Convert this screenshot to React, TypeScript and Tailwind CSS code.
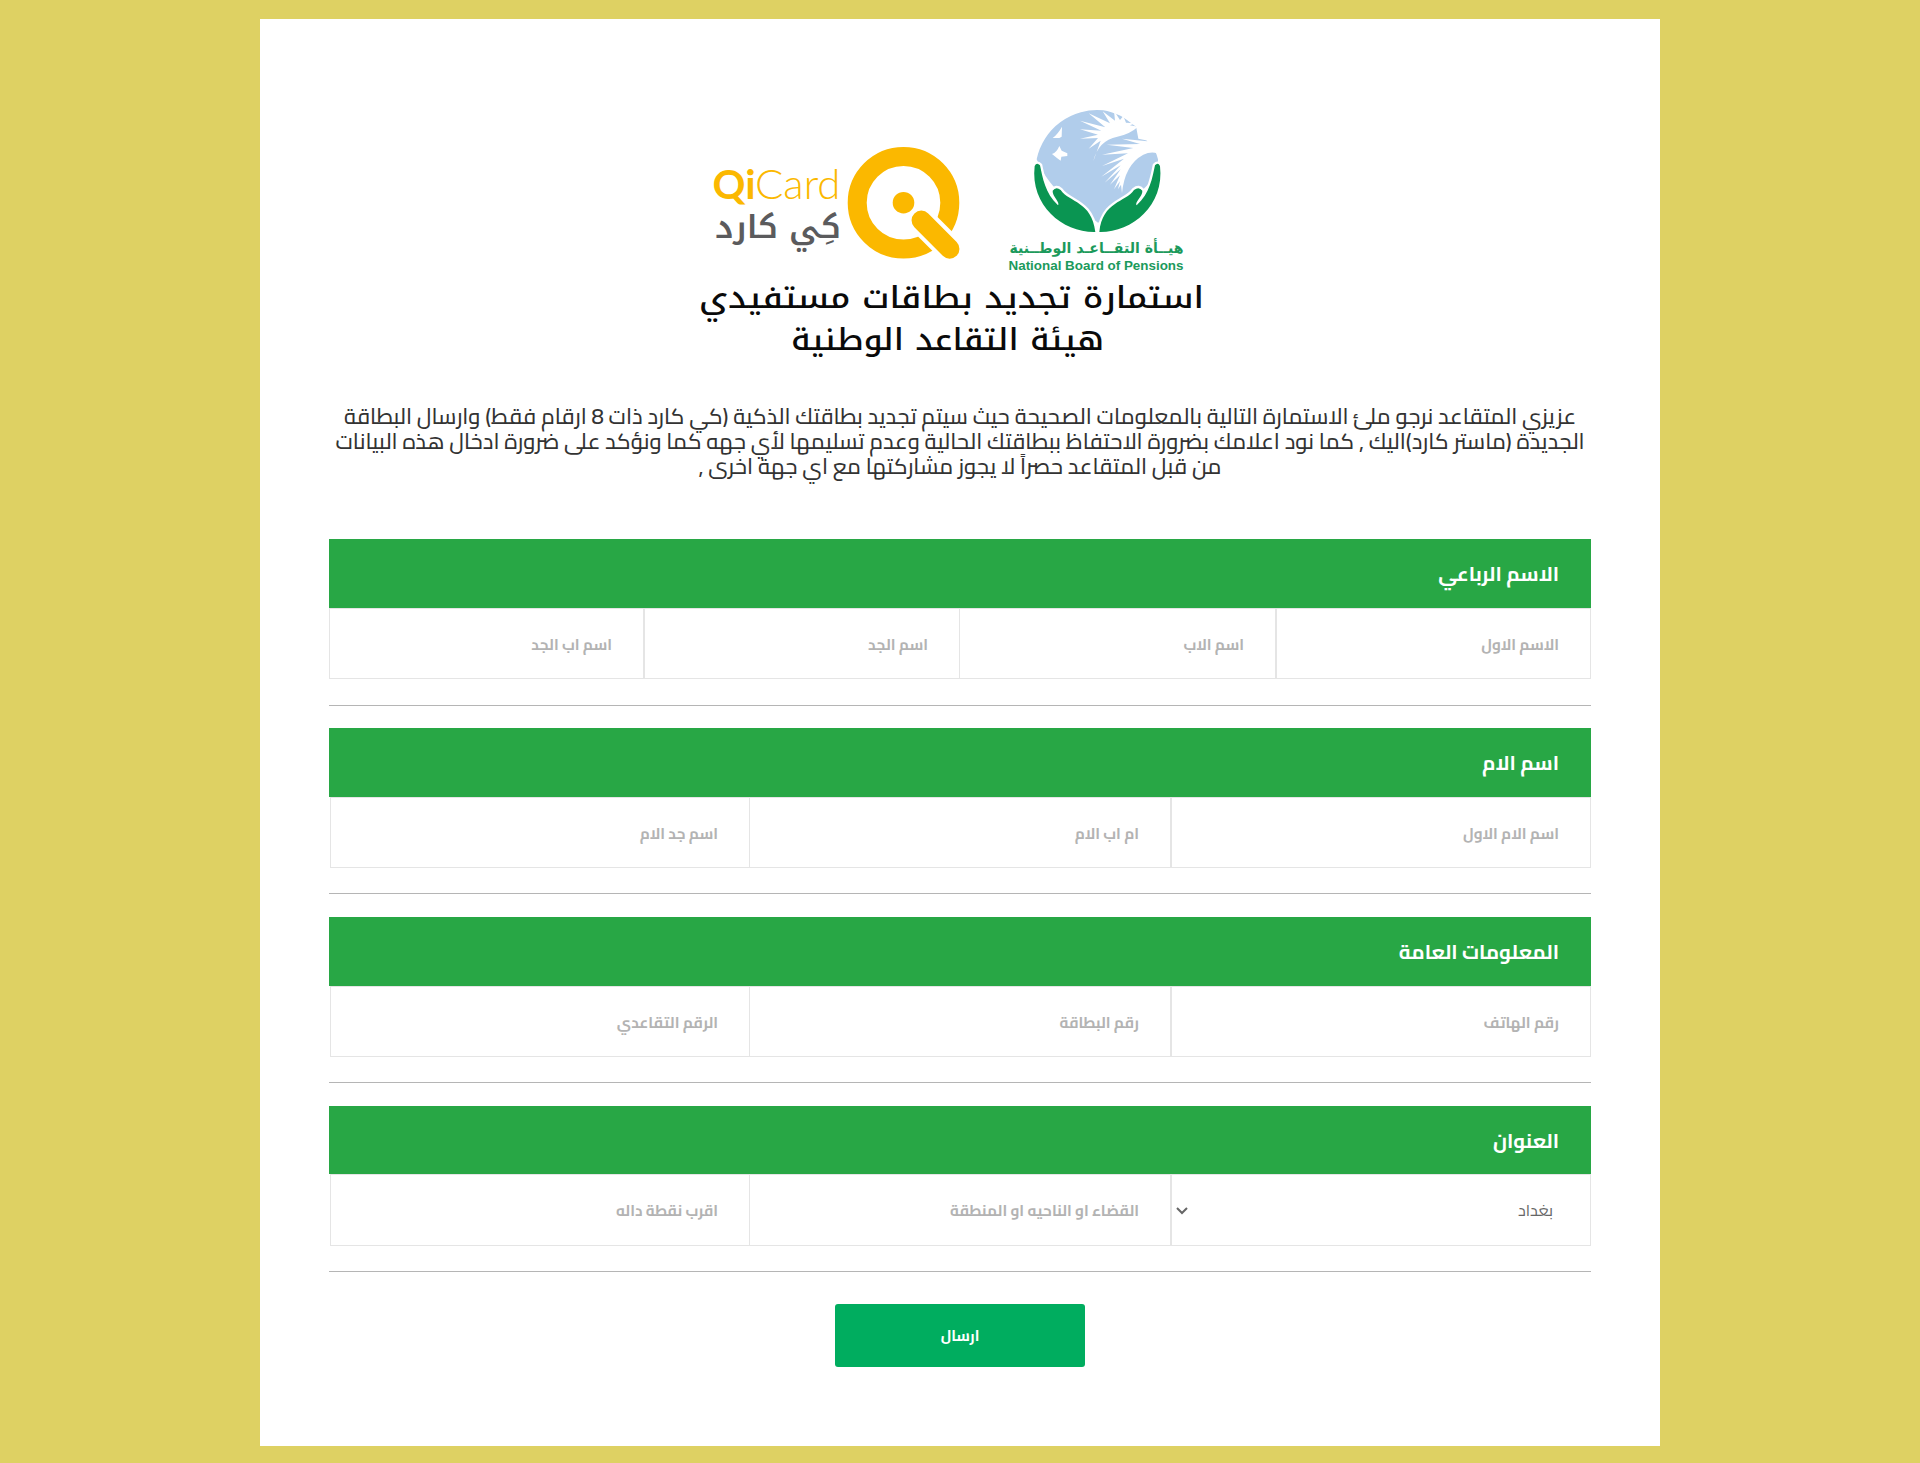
const four = ['w-[315px]', 'w-[317px]', '-mr-px w-[316px]', 'w-[315px]'];
const three = ['w-[420px]', 'w-[422px]', '-mr-px w-[420px]'];

const sections = [
  { title: 'الاسم الرباعي', head: 'h-[69px]', row: 'h-[71px]', rule: 'mt-[26px] mb-[22px]', widths: four, fields: ['الاسم الاول', 'اسم الاب', 'اسم الجد', 'اسم اب الجد'] },
  { title: 'اسم الام', head: 'h-[69px]', row: 'h-[71px]', rule: 'mt-[25px] mb-[23px]', widths: three, fields: ['اسم الام الاول', 'ام اب الام', 'اسم جد الام'] },
  { title: 'المعلومات العامة', head: 'h-[69px]', row: 'h-[71px]', rule: 'mt-[25px] mb-[23px]', widths: three, fields: ['رقم الهاتف', 'رقم البطاقة', 'الرقم التقاعدي'] },
  { title: 'العنوان', head: 'h-[68px]', row: 'h-[72px]', rule: 'mt-[25px] mb-[32px]', widths: three.slice(1), select: 'بغداد', fields: ['القضاء او الناحيه او المنطقة', 'اقرب نقطة داله'] },
];

function Globe() {
  return (
    <g transform="translate(1030 106) scale(0.33333)">
      <path d="M20 160 A185 185 0 0 1 220 13 C250 18 290 35 318 60 C345 90 375 120 384 160 L384 200 C340 260 250 330 204 350 C150 310 60 260 20 160Z" fill="#b1cdeb" />
      <g fill="#fff">
        <path d="M96 62 L95 92 L88 96 L68 96 Q84 84 96 62Z" />
        <path d="M66 144 Q80 140 88 120 L95 134 L112 142 L112 150 L94 152 L92 164 Q80 156 66 144Z" />
        <path d="M190 166 Q204 104 262 92 Q300 84 324 62 L300 58 L316 52 L288 50 L280 30 L270 42 L252 14 L255 44 L218 16 L240 52 L176 22 L226 64 L150 44 L214 74 L150 70 L204 86 L150 98 L204 96 L176 128 L212 104Z" />
        <path d="M276 262 Q284 176 340 146 Q362 136 382 142 L400 100 L340 92 L352 106 L276 98 L330 114 L230 116 L310 126 L216 146 L294 142 L216 180 L282 158 L214 212 L272 178 L224 230 L272 190 L240 236 L270 208 L252 250 L270 226 L264 250 L273 236Z" />
        <path d="M256 10 Q310 20 345 62 L318 62 L280 34Z" />
        <path d="M335 62 Q365 90 385 134 L362 106 L325 98 L318 60Z" />
      </g>
      <g fill="#0a9552" stroke="#fff" strokeWidth="14" paintOrder="stroke">
        <path d="M14 180 Q20 168 30 178 C38 215 45 262 84 298 C92 290 66 270 68 254 Q78 240 92 252 C118 290 185 285 196 378 C100 380 0 300 14 180Z" />
        <path d="M390 180 Q384 168 375 178 C367 215 360 262 320 298 C312 290 339 270 337 254 Q327 240 312 252 C286 290 218 285 208 378 C304 380 404 300 390 180Z" />
      </g>
    </g>
  );
}

function Banner() {
  return (
    <svg viewBox="690 100 520 270" className="h-[270px] w-[520px] font-['Noto_Kufi_Arabic','Cairo','DejaVu_Sans',sans-serif]">
      <Globe />
      <g fill="#1c9a5c" className="font-bold">
        <text direction="rtl" x="1183.5" y="253" fontSize="15" textLength="174" lengthAdjust="spacingAndGlyphs" className="font-['DejaVu_Sans',sans-serif]">هيــأة التقــاعـد الوطــنية</text>
        <text direction="ltr" x="1008.5" y="269.5" fontSize="13.3" textLength="175" lengthAdjust="spacingAndGlyphs" className="font-['Liberation_Sans',sans-serif]">National Board of Pensions</text>
      </g>
      <circle cx="903.5" cy="202.7" r="46.3" fill="none" stroke="#fbb800" strokeWidth="19" />
      <path d="M914 213 L965 264" stroke="#fff" strokeWidth="27.5" />
      <path d="M921.3 220.3 L949.7 248.9" stroke="#fbb800" strokeWidth="19.5" strokeLinecap="round" />
      <circle cx="903.5" cy="202.7" r="10.8" fill="#fbb800" />
      <g fill="#fbb800" fontSize="41" className="font-['Lato',sans-serif]">
        <text direction="ltr" x="712.5" y="199" textLength="43" lengthAdjust="spacingAndGlyphs" className="font-bold">Qi</text>
        <text direction="ltr" x="755" y="199" textLength="85.5" lengthAdjust="spacingAndGlyphs" className="font-light">Card</text>
      </g>
      <text direction="rtl" x="841" y="237.7" fontSize="31" textLength="126" lengthAdjust="spacingAndGlyphs" fill="#5b5b5d" className="font-semibold">كِي كارد</text>
      <g fill="#0a0a0a" fontSize="30" className="font-medium">
        <text direction="rtl" x="1204" y="308" textLength="505" lengthAdjust="spacingAndGlyphs">استمارة تجديد بطاقات مستفيدي</text>
        <text direction="rtl" x="1104" y="350" textLength="313" lengthAdjust="spacingAndGlyphs">هيئة التقاعد الوطنية</text>
      </g>
    </svg>
  );
}

const box = 'h-full min-w-0 border border-[#e5e5e5] bg-white outline-none';

export default function App() {
  return (
    <div dir="rtl" className="flex min-h-[1463px] flex-col items-center bg-[#ded163] pt-[19px] font-['Cairo','Noto_Kufi_Arabic','DejaVu_Sans',sans-serif]">
      <main className="flex h-[1427px] w-[1400px] flex-col bg-white px-[69px] pt-[81px]">
        <div className="flex justify-center pr-[20px]">
          <Banner />
        </div>
        <div className="mt-[34px] h-[135px] text-center text-[21.9px] leading-[25px] font-medium whitespace-nowrap text-[#333]">
          <p>عزيزي المتقاعد نرجو ملئ الاستمارة التالية بالمعلومات الصحيحة حيث سيتم تجديد بطاقتك الذكية (كي كارد ذات 8 ارقام فقط) وارسال البطاقة</p>
          <p>الجديدة (ماستر كارد)اليك , كما نود اعلامك بضرورة الاحتفاظ ببطاقتك الحالية وعدم تسليمها لأي جهه كما ونؤكد على ضرورة ادخال هذه البيانات</p>
          <p>من قبل المتقاعد حصراً لا يجوز مشاركتها مع اي جهة اخرى ,</p>
        </div>
        {sections.map((s) => (
          <section key={s.title} className="flex flex-col">
            <h2 className={`${s.head} flex items-center bg-[#28a745] px-[32px] pt-[2px] text-[20.2px] font-bold text-white`}>{s.title}</h2>
            <div className={`${s.row} flex`}>
              {s.select && (
                <div className="relative w-[420px]">
                  <select className={`${box} w-full appearance-none pr-[37px] text-[16px] text-[#666]`}>
                    <option>{s.select}</option>
                  </select>
                  <svg viewBox="0 0 12 8" className="absolute top-[33px] left-[5px] h-[8px] w-[12px]" fill="none" stroke="#666" strokeWidth="2">
                    <path d="M1 1 L6 6 L11 1" />
                  </svg>
                </div>
              )}
              {s.fields.map((f, i) => (
                <input
                  key={f}
                  placeholder={f}
                  className={`${box} ${s.widths[i]} px-[31px] pt-[1px] text-[15.2px] font-bold placeholder:text-[#b3b3b3] placeholder:opacity-100`}
                />
              ))}
            </div>
            <div className={`${s.rule} h-px bg-[#b5b5b5]`} />
          </section>
        ))}
        <button className="h-[63px] w-[250px] self-center rounded-[3px] bg-[#00ad5f] pt-[2px] text-[15px] font-bold tracking-[1.6px] text-white">ارسال</button>
      </main>
    </div>
  );
}
